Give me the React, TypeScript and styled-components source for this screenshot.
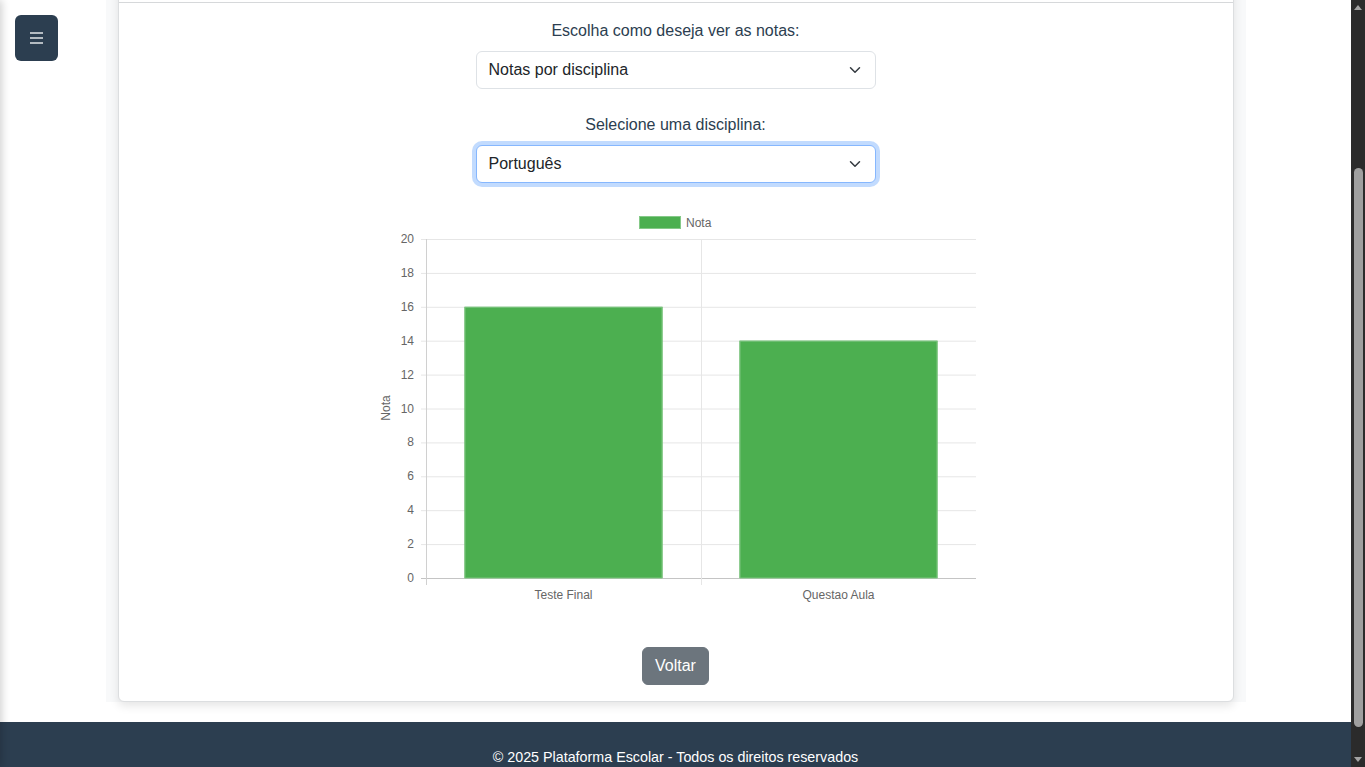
import React, { useLayoutEffect, useEffect } from "react";
import styled, { createGlobalStyle } from "styled-components";

const GlobalStyle = createGlobalStyle`
  html, body { margin: 0; padding: 0; background: #ffffff; }
  body {
    font-family: "Liberation Sans", Arial, Helvetica, sans-serif;
    color: #212529;
    font-size: 16px;
    line-height: 24px;
  }
  *, *::before, *::after { box-sizing: border-box; }
`;

const Page = styled.div`
  padding-right: 14px;
`;

const SidePanel = styled.aside`
  position: fixed;
  top: 0;
  left: -250px;
  width: 250px;
  height: 100vh;
  background: #2c3e50;
  box-shadow: 2px 0 8px rgba(0, 0, 0, 0.18);
  z-index: 20;
`;

const MenuButton = styled.button`
  position: fixed;
  top: 15px;
  left: 15px;
  width: 43px;
  height: 46px;
  border: none;
  border-radius: 6px;
  background: #2c3e50;
  display: flex;
  align-items: center;
  justify-content: center;
  padding: 0;
  cursor: pointer;
  z-index: 30;
`;

const ScrollRail = styled.div`
  position: fixed;
  top: 0;
  right: 0;
  width: 14px;
  height: 100vh;
  background: #2b2b2b;
  display: flex;
  flex-direction: column;
  align-items: center;
  z-index: 40;
`;

const ScrollArrow = styled.div`
  height: 15px;
  width: 14px;
  display: flex;
  align-items: center;
  justify-content: center;
  flex: none;
`;

const ScrollTrack = styled.div`
  flex: 1;
  width: 14px;
  display: flex;
  justify-content: center;
`;

const ScrollThumb = styled.div<{ $offset: number; $size: number }>`
  margin-top: ${(p) => p.$offset}px;
  width: 9px;
  height: ${(p) => p.$size}px;
  border-radius: 5px;
  background: #9f9f9f;
`;

const Main = styled.main`
  max-width: 1140px;
  margin: 0 auto;
  padding: 64px 12px 0;
  background: #f8f9fa;
`;

const PageTitle = styled.h2`
  margin: 0 0 55px;
  font-size: 28px;
  line-height: 36px;
  font-weight: 500;
  color: #2c3e50;
  text-align: center;
`;

const Card = styled.section`
  background: #ffffff;
  border: 1px solid #dcdee0;
  border-radius: 6px;
  box-shadow: 0 4px 10px rgba(0, 0, 0, 0.1);
`;

const CardHeader = styled.header`
  height: 57px;
  padding: 16px 20px;
  border-bottom: 1px solid #d6d8da;
  font-size: 20px;
  line-height: 24px;
  color: #2c3e50;
`;

const CardBody = styled.div`
  padding: 16px;
  display: flex;
  flex-direction: column;
  align-items: center;
`;

const FormGroup = styled.div<{ $gap: number }>`
  width: 400px;
  margin-bottom: ${(p) => p.$gap}px;
`;

const Label = styled.label`
  display: block;
  text-align: center;
  margin-bottom: 8px;
  font-size: 16px;
  line-height: 24px;
  color: #2c3e50;
`;

const SelectWrap = styled.div`
  position: relative;
`;

const Select = styled.select<{ $focused?: boolean }>`
  appearance: none;
  -webkit-appearance: none;
  display: block;
  width: 100%;
  height: 38px;
  padding: 6px 36px 6px 12px;
  font-family: inherit;
  font-size: 16px;
  line-height: 24px;
  color: #212529;
  background: #ffffff;
  border: 1px solid ${(p) => (p.$focused ? "#86b7fe" : "#dee2e6")};
  border-radius: 6px;
  box-shadow: ${(p) => (p.$focused ? "0 0 0 4px rgba(13, 110, 253, 0.25)" : "none")};
  outline: none;
`;

const Chevron = styled.svg`
  position: absolute;
  right: 15px;
  top: 13px;
  width: 12px;
  height: 12px;
  pointer-events: none;
`;

const ChartBox = styled.div`
  width: 600px;
  height: 400px;
`;

const BackButton = styled.button`
  margin-top: 41px;
  height: 38px;
  padding: 6px 12px;
  border: 1px solid #6c757d;
  border-radius: 6px;
  background: #6c757d;
  color: #ffffff;
  font-family: inherit;
  font-size: 16px;
  line-height: 24px;
  cursor: pointer;
`;

const Footer = styled.footer`
  margin-top: 20px;
  padding: 23px 0 32px;
  background: #2c3e50;
  color: #ffffff;
  text-align: center;
  font-size: 14.3px;
  line-height: 24px;
`;

type Nota = { label: string; value: number };
const notas: Nota[] = [
  { label: "Teste Final", value: 16 },
  { label: "Questao Aula", value: 14 },
];

const ChevronIcon = () => (
  <Chevron viewBox="0 0 16 16">
    <path d="m2 5 6 6 6-6" fill="none" stroke="#343a40" strokeWidth="2" strokeLinecap="round" strokeLinejoin="round" />
  </Chevron>
);

const BarChart = ({ data }: { data: Nota[] }) => {
  const left = 50;
  const right = 600;
  const top = 33;
  const bottom = 372;
  const max = 20;
  const step = (bottom - top) / max;
  const catW = (right - left) / data.length;
  const barW = catW * 0.72;
  const ticks = Array.from({ length: 11 }, (_, i) => i * 2);
  const y = (v: number) => bottom - v * step;
  return (
    <svg width="600" height="400" viewBox="0 0 600 400" fontFamily="'Liberation Sans', Arial, sans-serif">
      <rect x="263.5" y="10.5" width="41" height="12" fill="#4caf50" stroke="#85c988" strokeWidth="1" />
      <text x="310" y="20.5" fontSize="12" fill="#666">Nota</text>
      {ticks.map((t) => (
        <g key={t}>
          <line x1={left - 5} x2={right} y1={y(t) + 0.5} y2={y(t) + 0.5} stroke={t === 0 ? "#c4c4c4" : "#e6e6e6"} />
          <text x={38} y={y(t) + 4} fontSize="12" fill="#666" textAnchor="end">{t}</text>
        </g>
      ))}
      {Array.from({ length: data.length + 1 }, (_, i) => (
        <line key={i} x1={left + i * catW + 0.5} x2={left + i * catW + 0.5} y1={top} y2={bottom + 7} stroke={i === 0 ? "#d0d0d0" : "#e6e6e6"} />
      ))}
      {data.map((d, i) => {
        const x = left + i * catW + (catW - barW) / 2;
        return (
          <g key={d.label}>
            <rect x={x} y={y(d.value)} width={barW} height={bottom - y(d.value)} fill="#4caf50" />
            <rect x={x + 0.5} y={y(d.value) + 0.5} width={barW - 1} height={bottom - y(d.value) - 0.5} fill="none" stroke="#7cc47f" strokeWidth="1" />
            <text x={left + i * catW + catW / 2} y={393} fontSize="12" fill="#666" textAnchor="middle">{d.label}</text>
          </g>
        );
      })}
      <text x={0} y={0} fontSize="12" fill="#666" textAnchor="middle" transform="translate(14 202) rotate(-90)">Nota</text>
    </svg>
  );
};

const FakeScrollbar = () => (
  <ScrollRail aria-hidden="true">
    <ScrollArrow>
      <svg width="8" height="5" viewBox="0 0 8 5">
        <path d="M0 5 L4 0 L8 5 Z" fill="#a3a3a3" />
      </svg>
    </ScrollArrow>
    <ScrollTrack>
      <ScrollThumb $offset={153} $size={559} />
    </ScrollTrack>
    <ScrollArrow>
      <svg width="8" height="5" viewBox="0 0 8 5">
        <path d="M0 0 L8 0 L4 5 Z" fill="#a3a3a3" />
      </svg>
    </ScrollArrow>
  </ScrollRail>
);

export default function App() {
  useLayoutEffect(() => {
    window.scrollTo(0, 210);
  }, []);
  useEffect(() => {
    const id = window.setTimeout(() => window.scrollTo(0, 210), 0);
    return () => window.clearTimeout(id);
  }, []);

  return (
    <>
      <GlobalStyle />
      <SidePanel />
      <MenuButton aria-label="Menu">
        <svg width="13" height="12" viewBox="0 0 13 12">
          <g stroke="#ffffff" strokeWidth="1.3">
            <line x1="0" x2="13" y1="1" y2="1" />
            <line x1="0" x2="13" y1="6" y2="6" />
            <line x1="0" x2="13" y1="11" y2="11" />
          </g>
        </svg>
      </MenuButton>
      <FakeScrollbar />
      <Page>
        <Main>
          <PageTitle>Minhas Notas</PageTitle>
          <Card>
            <CardHeader>Boletim do Aluno</CardHeader>
            <CardBody>
              <FormGroup $gap={24}>
                <Label htmlFor="modo">Escolha como deseja ver as notas:</Label>
                <SelectWrap>
                  <Select id="modo" defaultValue="disciplina">
                    <option value="disciplina">Notas por disciplina</option>
                    <option value="todas">Todas as notas</option>
                  </Select>
                  <ChevronIcon />
                </SelectWrap>
              </FormGroup>
              <FormGroup $gap={23}>
                <Label htmlFor="disciplina">Selecione uma disciplina:</Label>
                <SelectWrap>
                  <Select id="disciplina" defaultValue="pt" $focused>
                    <option value="pt">Português</option>
                    <option value="mat">Matemática</option>
                  </Select>
                  <ChevronIcon />
                </SelectWrap>
              </FormGroup>
              <ChartBox>
                <BarChart data={notas} />
              </ChartBox>
              <BackButton>Voltar</BackButton>
            </CardBody>
          </Card>
        </Main>
        <Footer>© 2025 Plataforma Escolar - Todos os direitos reservados</Footer>
      </Page>
    </>
  );
}
